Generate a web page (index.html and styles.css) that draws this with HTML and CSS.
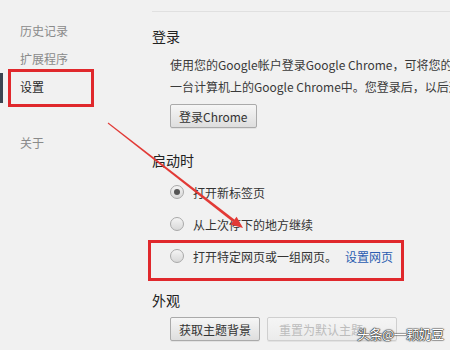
FILE: index.html
```html
<!DOCTYPE html>
<html lang="zh-CN">
<head>
  <meta charset="UTF-8">
  <title>设置</title>
  <link rel="stylesheet" href="styles.css">
</head>
<body>
  <div class="page">
    <ul class="nav">
      <li>历史记录</li>
      <li>扩展程序</li>
      <li class="active">设置</li>
      <li class="gap">关于</li>
    </ul>

    <div class="main">
      <h3>登录</h3>
      <div class="indent">
        <p class="desc">使用您的Google帐户登录Google Chrome，可将您的个性化浏览器功能保存到网络上，这样您就可以在任何</p>
        <p class="desc">一台计算机上的Google Chrome中。您登录后，以后这些功能都会自动同步。</p>
        <button class="btn">登录Chrome</button>
      </div>

      <h3 class="sec">启动时</h3>
      <div class="indent">
        <label class="row"><span class="radio checked"></span>打开新标签页</label>
        <label class="row"><span class="radio"></span>从上次停下的地方继续</label>
        <label class="row"><span class="radio"></span>打开特定网页或一组网页。<a class="link">设置网页</a></label>
      </div>

      <h3 class="sec2">外观</h3>
      <div class="indent btns">
        <button class="btn">获取主题背景</button>
        <button class="btn wide" disabled>重置为默认主题</button>
      </div>
    </div>

    <!-- annotations drawn on top of the screenshot -->
    <div class="mark mark-nav"></div>
    <div class="mark mark-opt"></div>
    <svg class="arrow" width="450" height="350" viewBox="0 0 450 350">
      <polygon points="107.7,123.4 108.3,122.6 234.4,219.4 232.6,221.8" fill="#e23a36"/>
      <polygon points="243,228 230.4,224.5 236.6,216.7" fill="#e23a36"/>
    </svg>
    <div class="watermark">头条@一颗奶豆</div>
  </div>
</body>
</html>
```

FILE: styles.css
```css
body {
  margin: 0;
  background: #f1f1f1;
  font-family: "Noto Sans CJK SC", "Liberation Sans", sans-serif;
  font-size: 12px;
  color: #333;
  overflow: hidden;
}
.page {
  position: relative;
  display: flex;
  width: 450px;
  height: 350px;
  overflow: hidden;
}

.nav {
  list-style: none;
  margin: 0;
  padding: 17px 0 0 0;
  width: 152px;
  flex: none;
}
.nav li {
  height: 28px;
  line-height: 28px;
  padding-left: 20px;
  color: #8a8a8a;
  position: relative;
}
.nav li.active {
  color: #2a2a2a;
}
.nav li.active::before {
  content: "";
  position: absolute;
  left: 0;
  top: 0;
  width: 3px;
  height: 30px;
  background: #3a4450;
}
.nav li.gap {
  margin-top: 28px;
}

.main {
  flex: 1;
  margin-top: 11px;
  border-top: 1px solid #e0e0e0;
  white-space: nowrap;
  min-width: 0;
}
h3 {
  margin: 14px 0 0 0;
  font-size: 14px;
  font-weight: normal;
  line-height: 20px;
  color: #222;
}
h3.sec {
  margin-top: 22px;
}
h3.sec2 {
  margin-top: 18px;
}
.indent {
  padding-left: 18px;
}
.desc {
  margin: 0;
  line-height: 22px;
  color: #3a3a3a;
}
.desc:first-child {
  margin-top: 8px;
}

.btn {
  font-family: inherit;
  font-size: 12px;
  color: #333;
  height: 24px;
  padding: 0 8px;
  margin-top: 6px;
  border: 1px solid #aaa;
  border-radius: 2px;
  background: linear-gradient(#f6f6f6, #dedede);
  box-shadow: 0 1px 0 rgba(0, 0, 0, 0.06);
}
.btn:disabled {
  color: #bcbcbc;
  border-color: #cfcfcf;
  background: linear-gradient(#f5f5f5, #ebebeb);
}
.btns {
  display: flex;
  gap: 7px;
  margin-top: 7px;
}
.btns .btn {
  margin-top: 0;
  width: 90px;
}
.btns .btn.wide {
  width: 130px;
  text-align: left;
  padding-left: 11px;
}

.row {
  display: flex;
  align-items: center;
  height: 32px;
  color: #333;
}
.row:first-child {
  margin-top: 6px;
}
.radio {
  width: 14px;
  height: 14px;
  box-sizing: border-box;
  border: 1px solid #a9a9a9;
  border-radius: 50%;
  background: linear-gradient(#f4f4f4, #d8d8d8);
  margin-right: 9px;
  display: flex;
  align-items: center;
  justify-content: center;
}
.radio.checked::after {
  content: "";
  width: 6px;
  height: 6px;
  border-radius: 50%;
  background: #555;
}
.link {
  color: #2a5db0;
  margin-left: 8px;
}

.mark {
  position: absolute;
  border: 3px solid #e0282c;
  box-sizing: border-box;
}
.mark-nav {
  left: 8px;
  top: 69px;
  width: 86px;
  height: 38px;
}
.mark-opt {
  left: 148px;
  top: 240px;
  width: 256px;
  height: 41px;
}
.arrow {
  position: absolute;
  left: 0;
  top: 0;
  pointer-events: none;
}
.watermark {
  position: absolute;
  left: 357px;
  top: 324px;
  font-size: 13px;
  color: #fff;
  text-shadow: 0 0 1px #222, 0 0 1px #222, 0 0 1px #222, 0 0 2px #444;
  letter-spacing: -0.5px;
}
```
